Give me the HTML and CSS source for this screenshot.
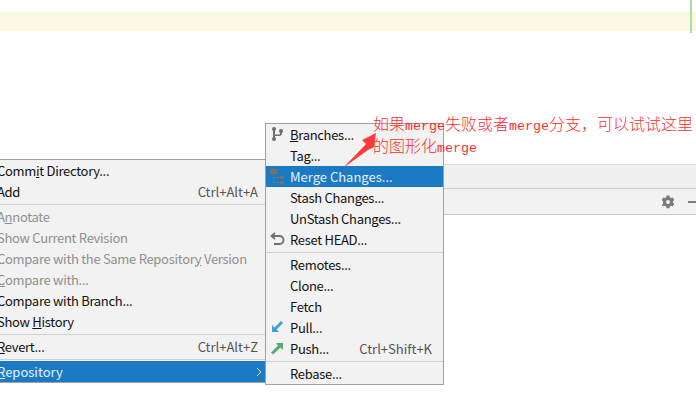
FILE: index.html
```html
<!DOCTYPE html>
<html lang="zh">
<head>
  <meta charset="UTF-8">
  <title>Repository menu</title>
  <link rel="stylesheet" href="styles.css">
</head>
<body>
  <div class="editor">
    <div class="yellow-line"></div>
    <div class="green-mark"></div>
  </div>
  <div class="tabs"></div>
  <div class="toolbar">
    <svg class="gear" width="14" height="14" viewBox="0 0 14 14"><path fill="#7a7a7a" fill-rule="evenodd" d="M5.600 0.500h2.800l.4 1.800 1.200.7 1.800-.5 1.400 2.400-1.300 1.300v1.400l1.300 1.300-1.400 2.400-1.800-.5-1.200.7-.4 1.800H5.600l-.4-1.800-1.200-.7-1.800.5L.8 9.900l1.300-1.300V6.400L.8 4.900l1.400-2.400 1.800.5 1.200-.7zM7 5a2 2 0 1 0 0 4 2 2 0 0 0 0-4z"/></svg>
    <div class="dash"></div>
  </div>

  <div class="menu menu-main">
    <div class="row"><span>Comm<u>i</u>t Directory...</span></div>
    <div class="row"><span>Add</span><span class="key">Ctrl+Alt+A</span></div>
    <div class="sep"></div>
    <div class="row off"><span>A<u>n</u>notate</span></div>
    <div class="row off"><span>Show Current Revision</span></div>
    <div class="row off"><span>Compare with the Same Repositor<u>y</u> Version</span></div>
    <div class="row off"><span><u>C</u>ompare with...</span></div>
    <div class="row"><span>Compare with Branch...</span></div>
    <div class="row"><span>Show <u>H</u>istory</span></div>
    <div class="sep"></div>
    <div class="row"><span><u>R</u>evert...</span><span class="key">Ctrl+Alt+Z</span></div>
    <div class="sep"></div>
    <div class="row active">
      <span><u>R</u>epository</span>
      <svg class="chevron" width="6" height="10" viewBox="0 0 6 10"><path d="M1 1l4 4-4 4" fill="none" stroke="#cfe3f3"/></svg>
    </div>
  </div>

  <div class="menu menu-sub">
    <div class="row">
      <svg class="ico" width="16" height="16" viewBox="0 0 16 16"><g fill="#6e6e6e"><circle cx="5" cy="3" r="2"/><circle cx="5" cy="13" r="2"/><circle cx="12" cy="5" r="2"/><rect x="4" y="3" width="2" height="10"/><path d="M11 6h2v1q0 3-3 3H5V8.500h5q1 0 1-1z"/></g></svg>
      <span><u>B</u>ranches...</span>
    </div>
    <div class="row"><span>Tag...</span></div>
    <div class="row active">
      <svg class="ico" width="16" height="16" viewBox="0 0 16 16"><g fill="#7b6f68"><rect x="1" y="1" width="7" height="5"/><rect x="11" y="8" width="4" height="3"/><rect x="11" y="13" width="4" height="3"/></g><path d="M4.500 6v8.500H11M4.500 9.500H11" fill="none" stroke="#7b6f68"/></svg>
      <span>Merge Changes...</span>
    </div>
    <div class="row"><span>Stash Changes...</span></div>
    <div class="row"><span>UnStash Changes...</span></div>
    <div class="row">
      <svg class="ico" width="16" height="16" viewBox="0 0 16 16"><path d="M6 2L2.500 5 6 8M3 5h7.500a3.500 3.500 0 0 1 0 8H5" fill="none" stroke="#6e6e6e" stroke-width="1.800"/></svg>
      <span>Reset HEAD...</span>
    </div>
    <div class="sep"></div>
    <div class="row"><span>Remotes...</span></div>
    <div class="row"><span>Clone...</span></div>
    <div class="row"><span>Fetch</span></div>
    <div class="row">
      <svg class="ico" width="16" height="16" viewBox="0 0 16 16"><path fill="#3d9fdc" d="M3 13V6l2.500 2.500L12 2l2 2-6.500 6.500L10 13z"/></svg>
      <span>Pull...</span>
    </div>
    <div class="row">
      <svg class="ico" width="16" height="16" viewBox="0 0 16 16"><path fill="#5aa86f" d="M14 3v7l-2.500-2.500L4 14.500l-2-2L9 5.500 7 3z"/></svg>
      <span>Push...</span><span class="key">Ctrl+Shift+K</span>
    </div>
    <div class="sep"></div>
    <div class="row"><span>Rebase...</span></div>
  </div>

  <svg class="arrow" width="50" height="50" viewBox="0 0 50 50"><path fill="#ff3b3b" d="M41 8L39 22 33 25 8 43 31 19 27 15z"/></svg>

  <div class="note">
    <div class="note-line">如果<span class="mono">merge</span>失败或者<span class="mono">merge</span>分支，可以试试这里</div>
    <div class="note-line">的图形化<span class="mono">merge</span></div>
  </div>
</body>
</html>
```
FILE: styles.css
```css
html, body { margin: 0; padding: 0; }
body { width: 696px; height: 417px; overflow: hidden; position: relative; background: #fff; font-family: "Noto Sans CJK SC", "Noto Sans", sans-serif; font-size: 13px; color: #111; letter-spacing: -0.3px; }

.editor { height: 164px; position: relative; }
.yellow-line { position: relative; top: 12px; height: 19px; background: #fdf8e3; }
.green-mark { position: absolute; left: 690px; top: 0; width: 2px; height: 33px; background: #a5dfa5; }

.tabs { height: 23px; background: #f0f0f0; border-top: 1px solid #dcdcdc; border-bottom: 1px solid #c9c9c9; }
.toolbar { height: 25px; background: #f2f2f2; border-bottom: 1px solid #c9c9c9; display: flex; align-items: center; justify-content: flex-end; gap: 13px; }
.dash { width: 8px; height: 2px; background: #7a7a7a; }

.menu { position: absolute; background: #f2f2f2; border: 1px solid #a0a0a0; box-sizing: border-box; }
.menu-main { left: -4px; top: 159px; width: 270px; height: 224px; }
.menu-sub { left: 265px; top: 123px; width: 179px; height: 262px; }

.row { height: 21px; display: flex; align-items: center; justify-content: space-between; padding: 0 7px 0 0; position: relative; white-space: nowrap; }
.menu-sub .row { padding-left: 24px; padding-right: 11px; justify-content: flex-start; }
.menu-sub .key { margin-left: auto; }
.key { color: #555; letter-spacing: 0; }
.off { color: #8f8f8f; }
.active { background: #1a7bc4; color: #e8f2fa; letter-spacing: 0; }
.chevron { margin-right: -4px; }
.sep { height: 1px; background: #cfcfcf; margin: 2px 0 1px; }
.ico { position: absolute; left: 3px; top: 2px; }

.arrow { position: absolute; left: 335px; top: 125px; }
.note { position: absolute; left: 373px; top: 112px; color: #ff2e2e; font-size: 16px; font-family: "Noto Sans CJK SC", sans-serif; font-weight: 300; white-space: nowrap; letter-spacing: 0; }
.note-line { height: 22px; line-height: 22px; }
.mono { font-family: "Liberation Mono", monospace; font-size: 13.33px; }
```
